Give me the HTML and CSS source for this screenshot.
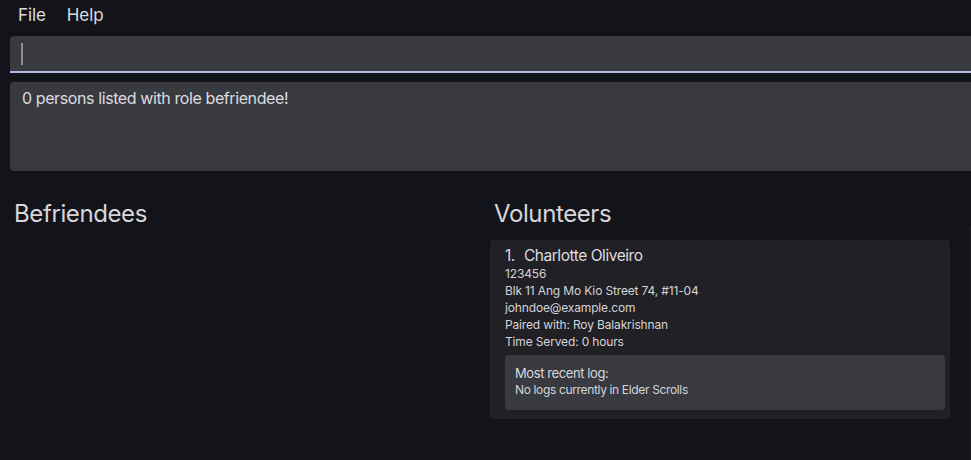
FILE: index.html
```html
<!DOCTYPE html>
<html>
<head>
<meta charset="utf-8">
<link rel="stylesheet" href="styles.css">
</head>
<body>
<div class="app">
  <div class="menubar">
    <span class="menu-item">File</span>
    <span class="menu-item">Help</span>
  </div>
  <div class="command-box"><span class="caret"></span></div>
  <div class="result-box">0 persons listed with role befriendee!</div>
  <div class="lists">
    <div class="column">
      <div class="column-title">Befriendees</div>
    </div>
    <div class="column column-right">
      <div class="column-title">Volunteers</div>
      <div class="card">
        <div class="card-name"><span class="card-index">1.</span>Charlotte Oliveiro</div>
        <div class="card-line">123456</div>
        <div class="card-line">Blk 11 Ang Mo Kio Street 74, #11-04</div>
        <div class="card-line">johndoe@example.com</div>
        <div class="card-line">Paired with: Roy Balakrishnan</div>
        <div class="card-line">Time Served: 0 hours</div>
        <div class="log-box">
          <div class="log-title">Most recent log:</div>
          <div class="log-text">No logs currently in Elder Scrolls</div>
        </div>
      </div>
    </div>
    <div class="scroll-track"></div>
  </div>
</div>
</body>
</html>
```

FILE: styles.css
```css
html, body {
  margin: 0;
  padding: 0;
  background: #131419;
  height: 100%;
  overflow: hidden;
}
body {
  font-family: Inter, "Noto Sans", sans-serif;
  color: #d6d6da;
}
.app {
  width: 971px;
  height: 460px;
  display: flex;
  flex-direction: column;
}
.menubar {
  height: 34px;
  display: flex;
  align-items: flex-start;
  padding: 5px 0 0 18px;
  gap: 21px;
  font-size: 17px;
  line-height: 20px;
  letter-spacing: -0.1px;
  border-bottom: 1px solid #0e0f13;
  box-sizing: border-box;
  color: #dcdce0;
}
.command-box {
  margin: 2px 0 0 10px;
  height: 35px;
  background: #393a3f;
  border-radius: 4px 0 0 0;
  border-bottom: 2px solid #b7b8ee;
  display: flex;
  align-items: center;
  padding-left: 11px;
}
.caret {
  width: 2px;
  height: 22px;
  background: #8d8e93;
}
.result-box {
  margin: 9px 0 0 10px;
  height: 89px;
  background: #393a3f;
  border-radius: 4px 0 0 4px;
  padding: 6px 12px;
  box-sizing: border-box;
  font-size: 16px;
  letter-spacing: -0.4px;
  color: #dcdce0;
}
.lists {
  flex: 1;
  display: flex;
  position: relative;
}
.column {
  width: 480px;
  padding: 28px 0 0 14px;
  box-sizing: border-box;
}
.column-right {
  width: 470px;
  padding-left: 10px;
}
.column-title {
  font-size: 24px;
  letter-spacing: -0.4px;
  color: #d6d6da;
  line-height: 30px;
  padding-left: 4px;
}
.column:first-child .column-title {
  padding-left: 0;
}
.card {
  margin-top: 11px;
  background: #202025;
  border-radius: 4px;
  padding: 7px 5px 9px 15px;
  height: 179px;
  box-sizing: border-box;
}
.card-name {
  font-size: 15.5px;
  letter-spacing: -0.45px;
  line-height: 18px;
  color: #dcdce0;
  margin-bottom: 0;
}
.card-index {
  margin-right: 9px;
}
.card-line {
  font-size: 12px;
  letter-spacing: -0.15px;
  line-height: 17px;
  color: #d4d4d8;
}
.log-box {
  margin-top: 5px;
  background: #393a3f;
  border-radius: 4px;
  height: 55px;
  padding: 9px 10px;
  box-sizing: border-box;
}
.log-title {
  font-size: 13px;
  letter-spacing: -0.4px;
  line-height: 18px;
  color: #d8d8dc;
}
.log-text {
  font-size: 12px;
  letter-spacing: -0.35px;
  line-height: 16px;
  color: #d4d4d8;
}
.scroll-track {
  position: absolute;
  right: 0;
  top: 55px;
  bottom: 0;
  width: 2px;
  background: #1a1b20;
}
```
